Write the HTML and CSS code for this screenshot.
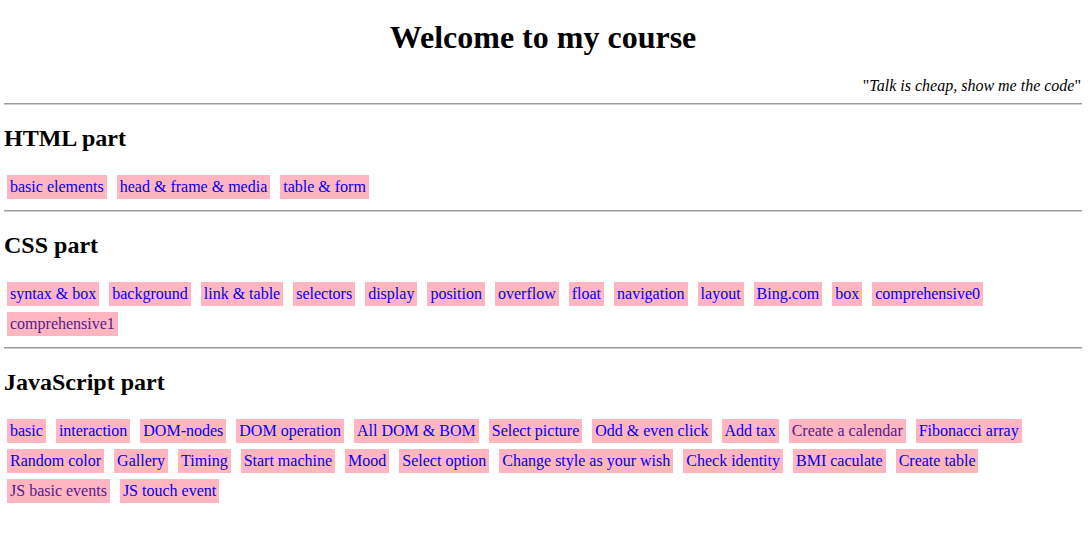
FILE: index.html
```html
<!DOCTYPE html>
<html>
<head>
<meta charset="utf-8">
<title>Welcome to my course</title>
<link rel="stylesheet" href="styles.css">
</head>
<body>
<h1 class="title">Welcome to my course</h1>
<div class="quote">"<i>Talk is cheap, show me the code</i>"</div>
<hr class="rule">
<h2 class="part">HTML part</h2>
<div class="links">
<a class="lnk" href="#">basic elements</a>
<a class="lnk" href="#">head &amp; frame &amp; media</a>
<a class="lnk" href="#">table &amp; form</a>
</div>
<hr class="rule">
<h2 class="part">CSS part</h2>
<div class="links">
<a class="lnk" href="#">syntax &amp; box</a>
<a class="lnk" href="#">background</a>
<a class="lnk" href="#">link &amp; table</a>
<a class="lnk" href="#">selectors</a>
<a class="lnk" href="#">display</a>
<a class="lnk" href="#">position</a>
<a class="lnk" href="#">overflow</a>
<a class="lnk" href="#">float</a>
<a class="lnk" href="#">navigation</a>
<a class="lnk" href="#">layout</a>
<a class="lnk" href="#">Bing.com</a>
<a class="lnk" href="#">box</a>
<a class="lnk" href="#">comprehensive0</a>
<a class="lnk visited" href="#">comprehensive1</a>
</div>
<hr class="rule">
<h2 class="part">JavaScript part</h2>
<div class="links">
<a class="lnk" href="#">basic</a>
<a class="lnk" href="#">interaction</a>
<a class="lnk" href="#">DOM-nodes</a>
<a class="lnk" href="#">DOM operation</a>
<a class="lnk" href="#">All DOM &amp; BOM</a>
<a class="lnk" href="#">Select picture</a>
<a class="lnk" href="#">Odd &amp; even click</a>
<a class="lnk" href="#">Add tax</a>
<a class="lnk visited" href="#">Create a calendar</a>
<a class="lnk" href="#">Fibonacci array</a>
<a class="lnk" href="#">Random color</a>
<a class="lnk" href="#">Gallery</a>
<a class="lnk" href="#">Timing</a>
<a class="lnk" href="#">Start machine</a>
<a class="lnk" href="#">Mood</a>
<a class="lnk" href="#">Select option</a>
<a class="lnk" href="#">Change style as your wish</a>
<a class="lnk" href="#">Check identity</a>
<a class="lnk" href="#">BMI caculate</a>
<a class="lnk" href="#">Create table</a>
<a class="lnk visited" href="#">JS basic events</a>
<a class="lnk" href="#">JS touch event</a>
</div>
</body>
</html>
```

FILE: styles.css
```css
body {
  margin: 8px 6px 8px 4px;
  font-family: "Liberation Serif", "Times New Roman", serif;
  font-size: 16px;
  color: #000;
  background: #fff;
}
.title {
  font-size: 32px;
  font-weight: bold;
  text-align: center;
  margin: 11px 0 21px;
}
.quote {
  text-align: right;
  padding-right: 1px;
}
.rule {
  margin: 8px 0;
  border: none;
  border-top: 1px solid #9a9a9a;
  border-bottom: 1px solid #d0d0d0;
  height: 0;
}
.part {
  font-size: 24px;
  font-weight: bold;
  margin: 20px 0;
}
.links {
  margin: 0;
}
.lnk {
  display: inline-block;
  margin: 3px;
  padding: 3px;
  background: #ffb6c1;
  color: #0000ee;
  text-decoration: none;
}
.visited {
  color: #551a8b;
}
```
